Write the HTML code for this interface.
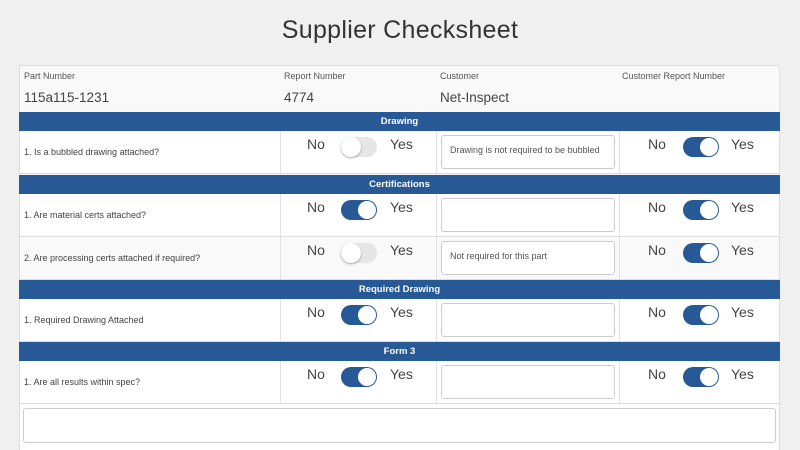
<!DOCTYPE html><html><head><style>
body{margin:0;width:800px;height:450px;background:#f0f0f0;font-family:"Liberation Sans",sans-serif;position:relative;overflow:hidden;color:#444}
div{position:absolute;box-sizing:border-box}
.t{left:0;width:800px;top:16px;text-align:center;font-size:25px;color:#333;letter-spacing:.3px}
.bar{left:19px;width:761px;height:19px;background:#265995;color:#fff;font-weight:bold;font-size:9.5px;text-align:center;line-height:19px}
.row{left:19px;width:761px;height:43px;background:#fff;border-bottom:1px solid #ddd;border-left:1px solid #ddd;border-right:1px solid #ddd}
.q{left:4px;font-size:9px;color:#444;top:16px}
.vl{top:0;bottom:0;width:1px;background:#e2e2e2}
.l{font-size:14px;color:#444;top:5px}
.tr{top:6px;width:36px;height:20px;border-radius:10px;background:#265995}
.tr::after{content:"";position:absolute;top:1px;right:1px;width:18px;height:18px;border-radius:50%;background:#fff}
.off{background:#e6e6e6}
.off::after{right:auto;left:0;top:0;width:20px;height:20px;box-shadow:0 1px 2px rgba(0,0,0,.35)}
.ta{left:421px;top:4px;width:174px;height:34px;border:1px solid #ccc;border-radius:3px;background:#fff;font-size:9px;color:#555;padding:9px 8px}
.hd{top:65px;height:47px;background:#f9f9f9;border-right:1px solid #e2e2e2;border-top:1px solid #ddd}
.hl{font-size:9px;color:#555;left:4px;top:5px}
.hv{font-size:13.5px;color:#444;left:4px;top:24px}
</style></head><body>
<div class="t">Supplier Checksheet</div>
<div class="hd" style="left:19px;width:262px;border-left:1px solid #ddd"><div class="hl">Part Number</div><div class="hv">115a115-1231</div></div>
<div class="hd" style="left:280px;width:157px"><div class="hl">Report Number</div><div class="hv">4774</div></div>
<div class="hd" style="left:436px;width:184px"><div class="hl">Customer</div><div class="hv">Net-Inspect</div></div>
<div class="hd" style="left:619px;width:161px"><div class="hl" style="left:3px">Customer Report Number</div></div>

<div class="bar" style="top:112px">Drawing</div>
<div class="row" style="top:131px"><div class="vl" style="left:260px"></div><div class="vl" style="left:416px"></div><div class="vl" style="left:599px"></div>
<div class="q">1. Is a bubbled drawing attached?</div><div class="l" style="left:287px">No</div><div class="tr off" style="left:321px"></div><div class="l" style="left:370px">Yes</div>
<div class="ta">Drawing is not required to be bubbled</div><div class="l" style="left:628px">No</div><div class="tr" style="left:663px"></div><div class="l" style="left:711px">Yes</div></div>

<div class="bar" style="top:175px">Certifications</div>
<div class="row" style="top:194px"><div class="vl" style="left:260px"></div><div class="vl" style="left:416px"></div><div class="vl" style="left:599px"></div>
<div class="q">1. Are material certs attached?</div><div class="l" style="left:287px">No</div><div class="tr" style="left:321px"></div><div class="l" style="left:370px">Yes</div>
<div class="ta"></div><div class="l" style="left:628px">No</div><div class="tr" style="left:663px"></div><div class="l" style="left:711px">Yes</div></div>
<div class="row" style="top:237px;background:#f9f9f9"><div class="vl" style="left:260px"></div><div class="vl" style="left:416px"></div><div class="vl" style="left:599px"></div>
<div class="q">2. Are processing certs attached if required?</div><div class="l" style="left:287px">No</div><div class="tr off" style="left:321px"></div><div class="l" style="left:370px">Yes</div>
<div class="ta">Not required for this part</div><div class="l" style="left:628px">No</div><div class="tr" style="left:663px"></div><div class="l" style="left:711px">Yes</div></div>

<div class="bar" style="top:280px">Required Drawing</div>
<div class="row" style="top:299px"><div class="vl" style="left:260px"></div><div class="vl" style="left:416px"></div><div class="vl" style="left:599px"></div>
<div class="q">1. Required Drawing Attached</div><div class="l" style="left:287px">No</div><div class="tr" style="left:321px"></div><div class="l" style="left:370px">Yes</div>
<div class="ta"></div><div class="l" style="left:628px">No</div><div class="tr" style="left:663px"></div><div class="l" style="left:711px">Yes</div></div>

<div class="bar" style="top:342px">Form 3</div>
<div class="row" style="top:361px"><div class="vl" style="left:260px"></div><div class="vl" style="left:416px"></div><div class="vl" style="left:599px"></div>
<div class="q">1. Are all results within spec?</div><div class="l" style="left:287px">No</div><div class="tr" style="left:321px"></div><div class="l" style="left:370px">Yes</div>
<div class="ta"></div><div class="l" style="left:628px">No</div><div class="tr" style="left:663px"></div><div class="l" style="left:711px">Yes</div></div>

<div style="left:19px;top:404px;width:761px;height:46px;background:#fff;border-left:1px solid #ddd;border-right:1px solid #ddd"></div>
<div style="left:23px;top:408px;width:753px;height:35px;border:1px solid #ccc;border-radius:3px;background:#fff"></div>
</body></html>
